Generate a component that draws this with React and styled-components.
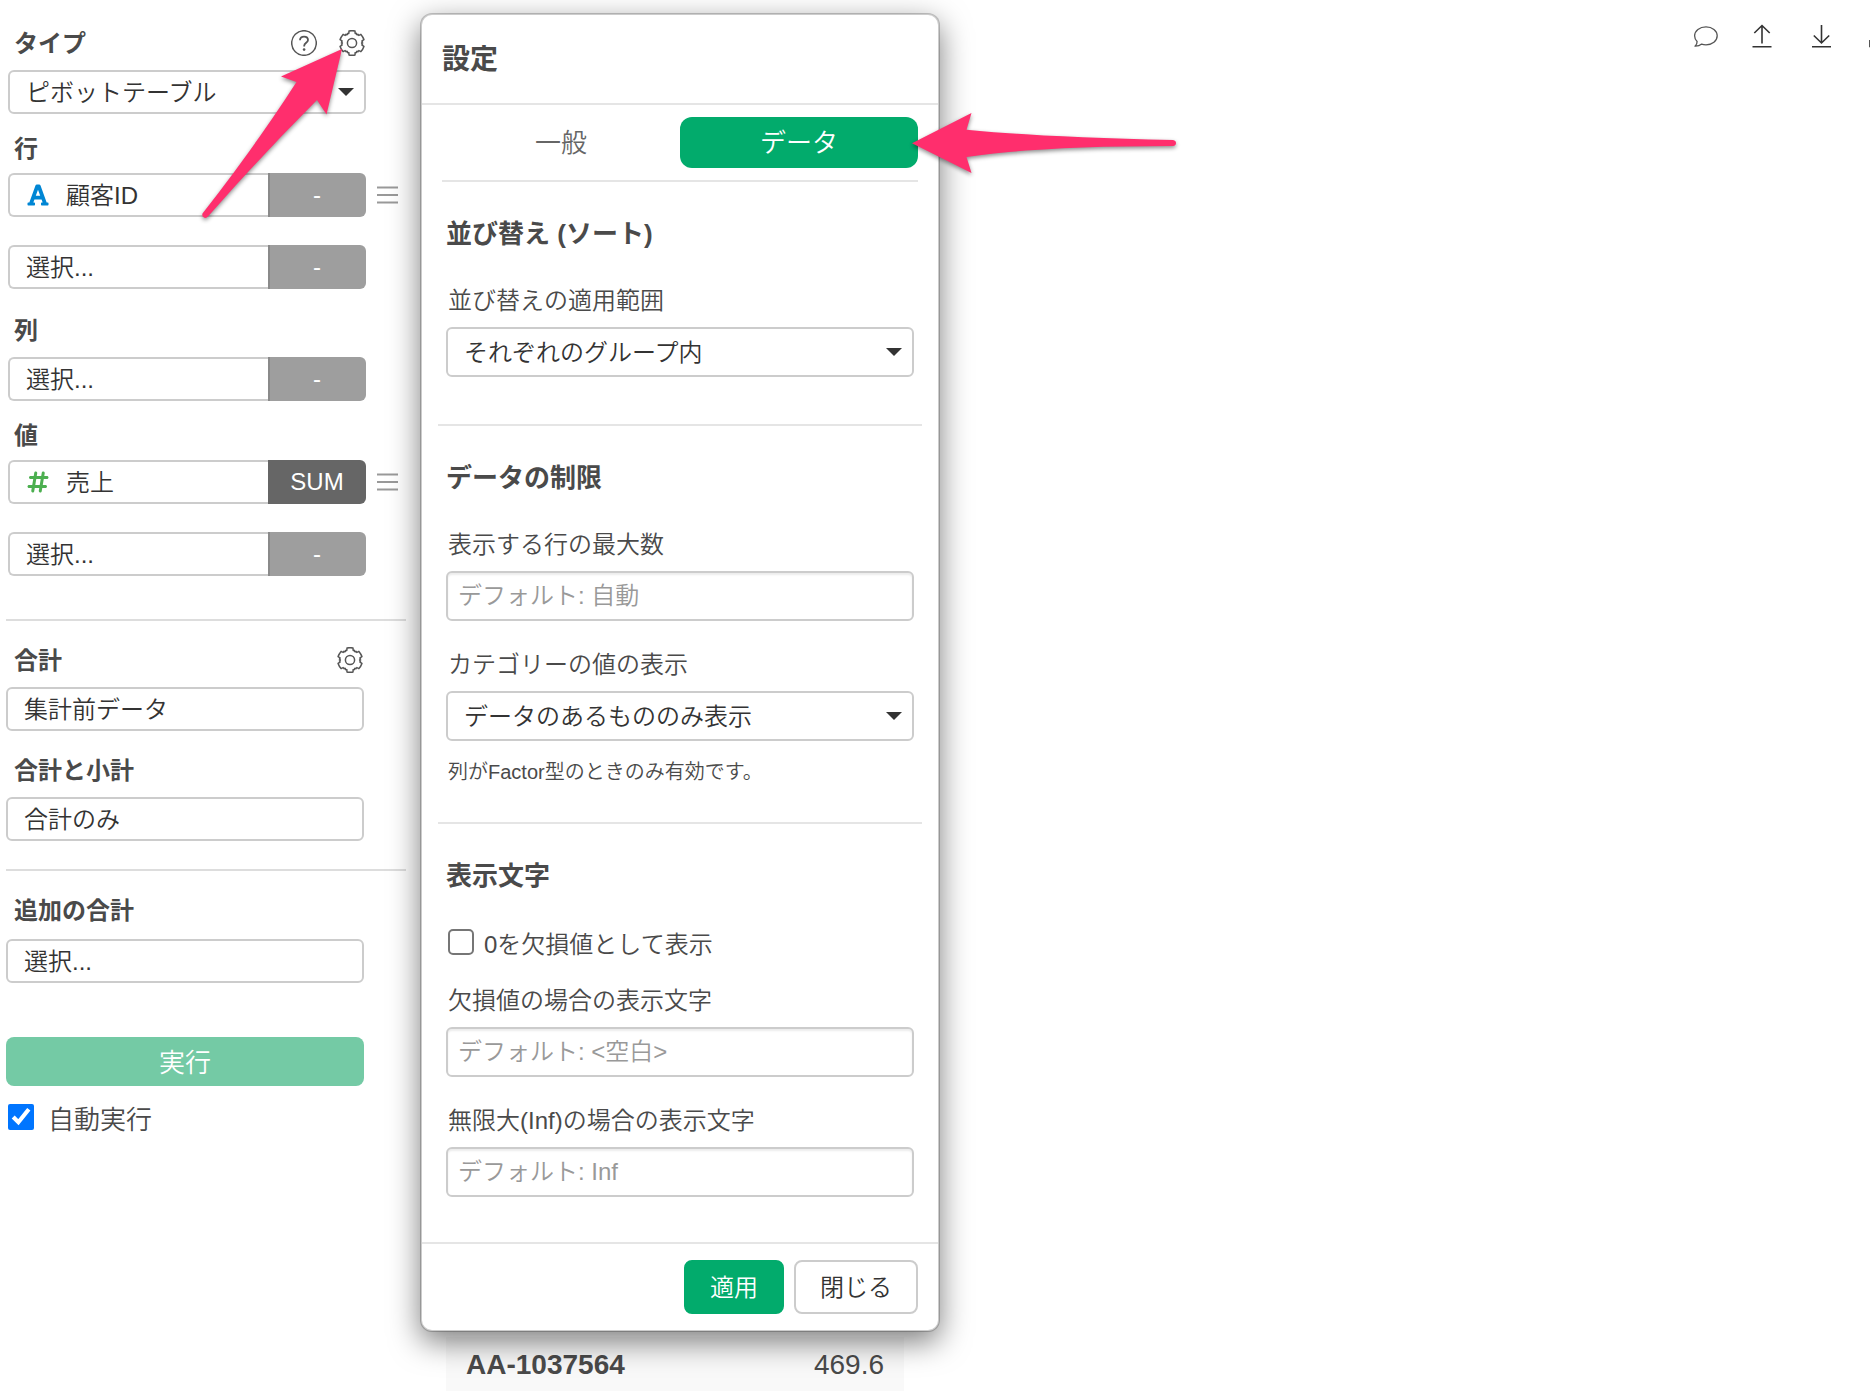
import React, { useState } from 'react';
import styled, { createGlobalStyle } from 'styled-components';
import { FaFont } from 'react-icons/fa';
import { FaHashtag } from 'react-icons/fa6';

const polar = (radius, deg) => {
  const rad = (deg * Math.PI) / 180;
  return `${(13 + radius * Math.sin(rad)).toFixed(2)} ${(13 - radius * Math.cos(rad)).toFixed(2)}`;
};

// six teeth, one every 60 degrees
const gearPath = [0, 60, 120, 180, 240, 300]
  .map((a, i) => (
    `${i === 0 ? 'M' : 'L'}${polar(10.2, a - 18)} L${polar(12.4, a - 14)} Q${polar(12.6, a)} ${polar(12.4, a + 14)} `
    + `L${polar(10.2, a + 18)} Q${polar(10, a + 22)} ${polar(10.6, a + 25)} Q${polar(8.6, a + 30)} ${polar(10.6, a + 35)} Q${polar(10, a + 38)} ${polar(10.2, a + 42)}`
  ))
  .join(' ');

const GearIcon = () => (
  <svg width="26" height="26" viewBox="0 0 26 26" fill="none" stroke="#555" strokeWidth="1.5" strokeLinejoin="round">
    <path d={`${gearPath} Z`} />
    <circle cx="13" cy="13" r="4.6" />
  </svg>
);

const HelpIcon = () => (
  <svg width="26" height="26" viewBox="0 0 26 26" fill="none" stroke="#555" strokeWidth="1.5">
    <circle cx="13" cy="13" r="12.3" />
    <path d="M9 10.2C9 7.8 10.7 6.6 13 6.6S17 8 17 10c0 2.6-3.8 3-3.8 5.8v.8" strokeWidth="1.8" />
    <circle cx="13.1" cy="19.6" r="1.3" fill="#555" stroke="none" />
  </svg>
);

const CaretIcon = () => (
  <svg width="16" height="8" viewBox="0 0 16 8" fill="#333">
    <path d="M0 0h16L8 8z" />
  </svg>
);

const CommentIcon = () => (
  <svg width="24" height="24" viewBox="0 0 24 24" overflow="visible" fill="none" stroke="#555" strokeWidth="1.3" strokeLinejoin="round">
    <path d="M14 2.8c6.300 0 11.200 4 11.200 9s-5 9-11.200 9c-1.600 0-3-.2-4.300-.7-1.800 1.500-4 2.200-6.700 2.100 1.400-1.300 2.200-2.900 2.100-4.700C3.500 15.900 2.600 14 2.600 11.800c0-5 5-9 11.400-9z" />
  </svg>
);

const UploadIcon = () => (
  <svg width="24" height="24" viewBox="0 0 24 24" fill="none" stroke="#333" strokeWidth="1.6">
    <path d="M11 19.500V1.800M3.300 9L11 1.500 18.700 9M1.500 22.800h19" />
  </svg>
);

const DownloadIcon = () => (
  <svg width="24" height="24" viewBox="0 0 24 24" fill="none" stroke="#333" strokeWidth="1.6">
    <path d="M11.500 1v18M3.800 11.500L11.500 19l7.700-7.500M2 22.800h19" />
  </svg>
);

const TrayIcon = () => (
  <svg width="24" height="24" viewBox="0 0 24 24" fill="none" stroke="#555" strokeWidth="1.6">
    <path d="M.8 16v6.500h22.400V16" />
  </svg>
);

const ColumnField = ({ label, icon, value, func, draggable }) => (
  <FieldLine>
    <FieldBox>
      {icon && <TypeIcon>{icon}</TypeIcon>}
      <FieldSelect aria-label={label} $hasIcon={Boolean(icon)} $joined defaultValue={value}>
        <option>{value}</option>
      </FieldSelect>
      <FunctionButton type="button" $selected={func !== '-'}>{func}</FunctionButton>
    </FieldBox>
    {draggable && (
      <DragHandle type="button" aria-label="並び替え">
        <svg width="21" height="18" viewBox="0 0 21 18" stroke="#999" strokeWidth="2">
          <path d="M0 1.500h21M0 9h21M0 16.500h21" />
        </svg>
      </DragHandle>
    )}
  </FieldLine>
);

const App = () => {
  const [autoRun, setAutoRun] = useState(true);
  const [zeroAsNa, setZeroAsNa] = useState(false);
  const [activeTab, setActiveTab] = useState('data');

  return (
    <Page>
      <GlobalStyle />
      <Sidebar>
        <ColumnSettings>
          <FieldGroup $gap={12}>
            <GroupHeader>
              <GroupTitle as="label" htmlFor="chart-type">タイプ</GroupTitle>
              <HeaderIcons>
                <IconButton type="button" aria-label="ヘルプ"><HelpIcon /></IconButton>
                <IconButton type="button" aria-label="設定"><GearIcon /></IconButton>
              </HeaderIcons>
            </GroupHeader>
            <FieldBox>
              <FieldSelect id="chart-type" defaultValue="ピボットテーブル">
                <option>ピボットテーブル</option>
              </FieldSelect>
              <Caret><CaretIcon /></Caret>
            </FieldBox>
          </FieldGroup>

          <FieldGroup $top={21} $gap={10}>
            <GroupTitle>行</GroupTitle>
            <FieldList>
              <ColumnField label="行 1" icon={<FaFont size={24} color="#0086d4" />} value="顧客ID" func="-" draggable />
              <ColumnField label="行 2" value="選択..." func="-" />
            </FieldList>
          </FieldGroup>

          <FieldGroup $top={28} $gap={12}>
            <GroupTitle>列</GroupTitle>
            <ColumnField label="列 1" value="選択..." func="-" />
          </FieldGroup>

          <FieldGroup $top={21} $gap={10}>
            <GroupTitle>値</GroupTitle>
            <FieldList>
              <ColumnField label="値 1" icon={<FaHashtag size={24} color="#4caf50" />} value="売上" func="SUM" draggable />
              <ColumnField label="値 2" value="選択..." func="-" />
            </FieldList>
          </FieldGroup>
        </ColumnSettings>

        <Divider $top={43} />

        <FieldGroup $top={26} $gap={12}>
          <GroupHeader>
            <GroupTitle as="label" htmlFor="total-source" $indent={8}>合計</GroupTitle>
            <HeaderIcons>
              <IconButton type="button" aria-label="合計の設定"><GearIcon /></IconButton>
            </HeaderIcons>
          </GroupHeader>
          <FieldBox>
            <FieldSelect id="total-source" defaultValue="集計前データ">
              <option>集計前データ</option>
            </FieldSelect>
          </FieldBox>
        </FieldGroup>

        <FieldGroup $top={26} $gap={12}>
          <GroupTitle as="label" htmlFor="total-type" $indent={8}>合計と小計</GroupTitle>
          <FieldBox>
            <FieldSelect id="total-type" defaultValue="合計のみ">
              <option>合計のみ</option>
            </FieldSelect>
          </FieldBox>
        </FieldGroup>

        <Divider $top={28} />

        <FieldGroup $top={26} $gap={14}>
          <GroupTitle as="label" htmlFor="extra-total" $indent={8}>追加の合計</GroupTitle>
          <FieldBox>
            <FieldSelect id="extra-total" defaultValue="選択...">
              <option>選択...</option>
            </FieldSelect>
          </FieldBox>
        </FieldGroup>

        <RunButton type="button">実行</RunButton>
        <AutoRunLabel>
          <AutoRunCheckbox type="checkbox" checked={autoRun} onChange={() => setAutoRun(!autoRun)} />
          自動実行
        </AutoRunLabel>
      </Sidebar>

      <Main>
        <Toolbar>
          <IconButton type="button" aria-label="コメント"><CommentIcon /></IconButton>
          <IconButton type="button" aria-label="アップロード"><UploadIcon /></IconButton>
          <IconButton type="button" aria-label="ダウンロード"><DownloadIcon /></IconButton>
          <IconButton type="button" aria-label="保存"><TrayIcon /></IconButton>
        </Toolbar>
        <PivotTable>
          <tbody>
            <tr>
              <th scope="row">AA-1037564</th>
              <td>469.6</td>
            </tr>
          </tbody>
        </PivotTable>
      </Main>

      <Dialog role="dialog" aria-labelledby="dialog-title">
        <DialogHeader>
          <DialogTitle id="dialog-title">設定</DialogTitle>
        </DialogHeader>

        <Tabs role="tablist">
          <Tab type="button" role="tab" $active={activeTab === 'general'} onClick={() => setActiveTab('general')}>
            一般
          </Tab>
          <Tab type="button" role="tab" $active={activeTab === 'data'} onClick={() => setActiveTab('data')}>
            データ
          </Tab>
        </Tabs>

        <Section $bottom={47}>
          <SectionTitle>並び替え (ソート)</SectionTitle>
          <FormField>
            <FormLabel htmlFor="sort-scope">並び替えの適用範囲</FormLabel>
            <SelectWrap>
              <FormSelect id="sort-scope" defaultValue="それぞれのグループ内">
                <option>それぞれのグループ内</option>
              </FormSelect>
              <Caret><CaretIcon /></Caret>
            </SelectWrap>
          </FormField>
        </Section>

        <Section $bottom={36}>
          <SectionTitle>データの制限</SectionTitle>
          <FormFields>
            <FormField>
              <FormLabel htmlFor="max-rows">表示する行の最大数</FormLabel>
              <FormInput id="max-rows" type="text" placeholder="デフォルト: 自動" />
            </FormField>
            <FormField>
              <FormLabel htmlFor="category-values">カテゴリーの値の表示</FormLabel>
              <SelectWrap>
                <FormSelect id="category-values" defaultValue="データのあるもののみ表示">
                  <option>データのあるもののみ表示</option>
                </FormSelect>
                <Caret><CaretIcon /></Caret>
              </SelectWrap>
              <HelpText>列がFactor型のときのみ有効です。</HelpText>
            </FormField>
          </FormFields>
        </Section>

        <Section $bottom={45} $last>
          <SectionTitle>表示文字</SectionTitle>
          <FormFields>
            <CheckLabel>
              <FormCheckbox type="checkbox" checked={zeroAsNa} onChange={() => setZeroAsNa(!zeroAsNa)} />
              0を欠損値として表示
            </CheckLabel>
            <FormField>
              <FormLabel htmlFor="na-text">欠損値の場合の表示文字</FormLabel>
              <FormInput id="na-text" type="text" placeholder="デフォルト: <空白>" />
            </FormField>
            <FormField>
              <FormLabel htmlFor="inf-text">無限大(Inf)の場合の表示文字</FormLabel>
              <FormInput id="inf-text" type="text" placeholder="デフォルト: Inf" />
            </FormField>
          </FormFields>
        </Section>

        <DialogFooter>
          <FooterButton type="button" $primary>適用</FooterButton>
          <FooterButton type="button">閉じる</FooterButton>
        </DialogFooter>
      </Dialog>

      <Arrows width="1190" height="240" viewBox="0 0 1190 240" fill="#ff2e6d" aria-hidden="true">
        <path d="M342 49L281 76.500l15.500 5.500Q256 145 202.500 213.500q-1 3.500 2 4.300 2 .5 3.500-1.300Q261 156 317 100l9.500 14.500z" />
        <path d="M912 143.300l59.500-30.300-5 16.700Q1040 137 1173 140q3 .5 3 3t-3 3Q1040 146 966.500 157l5 16z" />
      </Arrows>
    </Page>
  );
};

// Styles
const GlobalStyle = createGlobalStyle`
  * {
    box-sizing: border-box;
  }

  body {
    margin: 0;
    background: #fff;
  }

  body, button, input, select {
    font-family: "Liberation Sans", "Noto Sans CJK JP", sans-serif;
    font-size: 24px;
    font-weight: 350;
    color: #333;
  }
`;

const Page = styled.div`
  position: relative;
  display: flex;
  min-height: 100vh;
  overflow: hidden;
`;

const Sidebar = styled.aside`
  flex: 0 0 406px;
  padding: 30px 0 0 6px;
`;

const ColumnSettings = styled.div`
  padding-left: 2px;
`;

const FieldGroup = styled.div`
  display: flex;
  flex-direction: column;
  gap: ${props => props.$gap}px;
  margin-top: ${props => props.$top || 0}px;
`;

const GroupHeader = styled.div`
  display: flex;
  justify-content: space-between;
  width: 358px;
  height: 28px;
`;

const GroupTitle = styled.div`
  padding-left: ${props => props.$indent || 6}px;
  font-weight: 600;
  line-height: 28px;
  height: 28px;
  color: #4a4a4a;
`;

const HeaderIcons = styled.div`
  display: flex;
  align-items: flex-start;
  gap: 22px;
  padding-right: 1px;
`;

const IconButton = styled.button`
  display: flex;
  padding: 0;
  border: none;
  background: none;
  cursor: pointer;
`;

const FieldList = styled.div`
  display: flex;
  flex-direction: column;
  gap: 28px;
`;

const FieldLine = styled.div`
  display: flex;
  align-items: center;
  gap: 11px;
`;

const FieldBox = styled.div`
  position: relative;
  display: flex;
  width: 358px;
  height: 44px;
`;

const FieldSelect = styled.select`
  appearance: none;
  flex: 1;
  min-width: 0;
  padding: 0 0 0 ${props => props.$hasIcon ? '56px' : '16px'};
  border: 2px solid #ccc;
  border-right-width: ${props => props.$joined ? '0' : '2px'};
  border-radius: ${props => props.$joined ? '6px 0 0 6px' : '6px'};
  background: #fff;
`;

const TypeIcon = styled.span`
  position: absolute;
  left: 18px;
  top: 0;
  display: flex;
  align-items: center;
  justify-content: center;
  width: 24px;
  height: 44px;
  pointer-events: none;
`;

const FunctionButton = styled.button`
  width: 98px;
  padding: 0 2px 0 0;
  border: none;
  border-left: 2px solid ${props => props.$selected ? '#666' : '#8a8a8a'};
  border-radius: 0 6px 6px 0;
  background: ${props => props.$selected ? '#666' : '#9e9e9e'};
  color: #fff;
`;

const DragHandle = styled.button`
  display: flex;
  padding: 0;
  border: none;
  background: none;
  cursor: move;
`;

const Caret = styled.span`
  position: absolute;
  right: 12px;
  top: 0;
  display: flex;
  align-items: center;
  height: 100%;
  pointer-events: none;
`;

const Divider = styled.hr`
  height: 2px;
  margin: ${props => props.$top}px 0 0;
  border: none;
  background: #ddd;
`;

const RunButton = styled.button`
  display: block;
  width: 358px;
  height: 49px;
  margin-top: 54px;
  padding: 0 0 2px;
  border: none;
  border-radius: 8px;
  background: #74caa5;
  color: #fff;
  font-size: 26px;
`;

const AutoRunLabel = styled.label`
  display: flex;
  align-items: center;
  gap: 14px;
  margin-top: 18px;
  padding-left: 2px;
  height: 26px;
  font-size: 26px;
  color: #4a4a4a;
`;

const AutoRunCheckbox = styled.input`
  width: 26px;
  height: 26px;
  margin: 0;
  accent-color: #0075ff;
`;

const Main = styled.main`
  display: flex;
  flex: 1;
  flex-direction: column;
  justify-content: space-between;
  min-width: 0;
  padding: 24px 0 5px 40px;
`;

const Toolbar = styled.div`
  display: flex;
  justify-content: flex-end;
  gap: 35px;
  margin-right: -23px;
`;

const PivotTable = styled.table`
  width: 458px;
  border-collapse: collapse;
  background: #f9f9f9;
  font-size: 28px;
  color: #4a4a4a;

  th, td {
    height: 54px;
    padding: 2px 20px 0;
  }

  th {
    text-align: left;
    font-weight: bold;
  }

  td {
    text-align: right;
  }
`;

const Dialog = styled.section`
  position: absolute;
  left: 420px;
  top: 13px;
  width: 520px;
  border: 2px solid rgba(0, 0, 0, 0.2);
  border-radius: 12px;
  background: #fff;
  background-clip: padding-box;
  box-shadow: 0 10px 30px rgba(0, 0, 0, 0.5);
`;

const DialogHeader = styled.header`
  display: flex;
  align-items: center;
  height: 90px;
  padding: 0 20px 4px;
  border-bottom: 2px solid #e5e5e5;
`;

const DialogTitle = styled.h2`
  margin: 0;
  font-size: 28px;
  font-weight: 600;
  color: #4a4a4a;
`;

const Tabs = styled.div`
  display: flex;
  margin: 0 20px;
  padding: 12px 0;
  border-bottom: 2px solid #e5e5e5;
`;

const Tab = styled.button`
  flex: 1;
  height: 51px;
  padding: 0 0 4px;
  border: none;
  border-radius: 12px;
  background: ${props => props.$active ? '#02ab6c' : 'transparent'};
  color: ${props => props.$active ? '#fff' : '#666'};
  font-size: 26px;
`;

const Section = styled.div`
  margin: 0 16px;
  padding: 37px 8px ${props => props.$bottom}px;
  border-bottom: ${props => props.$last ? 'none' : '2px solid #e5e5e5'};
`;

const SectionTitle = styled.h3`
  margin: 0 0 38px;
  font-size: 26px;
  line-height: 30px;
  height: 30px;
  font-weight: 600;
  color: #4a4a4a;
`;

const FormFields = styled.div`
  display: flex;
  flex-direction: column;
  gap: 30px;
`;

const FormField = styled.div`
  display: flex;
  flex-direction: column;
`;

const FormLabel = styled.label`
  height: 28px;
  margin-bottom: 12px;
  padding-left: 2px;
  line-height: 28px;
  color: #4a4a4a;
`;

const SelectWrap = styled.div`
  position: relative;
  display: flex;
`;

const FormSelect = styled.select`
  appearance: none;
  flex: 1;
  height: 50px;
  padding: 0 40px 0 16px;
  border: 2px solid #ccc;
  border-radius: 6px;
  background: #fff;
`;

const FormInput = styled.input`
  height: 50px;
  padding: 0 10px;
  border: 2px solid #ccc;
  border-radius: 6px;
  background: #fff;
  box-shadow: inset 0 2px 2px rgba(0, 0, 0, 0.08);

  &::placeholder {
    color: #999;
    opacity: 1;
  }
`;

const HelpText = styled.p`
  height: 28px;
  margin: 17px 0 0;
  padding-left: 2px;
  font-size: 20px;
  line-height: 28px;
  color: #4a4a4a;
`;

const CheckLabel = styled.label`
  display: flex;
  align-items: center;
  gap: 10px;
  height: 28px;
  padding: 0 0 2px 2px;
  color: #4a4a4a;
`;

const FormCheckbox = styled.input`
  appearance: none;
  width: 26px;
  height: 26px;
  margin: 0;
  border: 2px solid #767676;
  border-radius: 5px;
  background: #fff;

  &:checked {
    border-color: #0075ff;
    background: #0075ff;
  }
`;

const DialogFooter = styled.footer`
  display: flex;
  justify-content: flex-end;
  gap: 10px;
  padding: 16px 20px;
  border-top: 2px solid #e5e5e5;
`;

const FooterButton = styled.button`
  width: ${props => props.$primary ? '100px' : '124px'};
  height: 54px;
  padding: 0 0 3px;
  border: 2px solid ${props => props.$primary ? '#02ab6c' : '#ccc'};
  border-radius: 8px;
  background: ${props => props.$primary ? '#02ab6c' : '#fff'};
  color: ${props => props.$primary ? '#fff' : '#333'};
`;

const Arrows = styled.svg`
  position: absolute;
  left: 0;
  top: 0;
  pointer-events: none;
  filter: drop-shadow(0 2px 2px rgba(0, 0, 0, 0.45));
`;

export default App;
